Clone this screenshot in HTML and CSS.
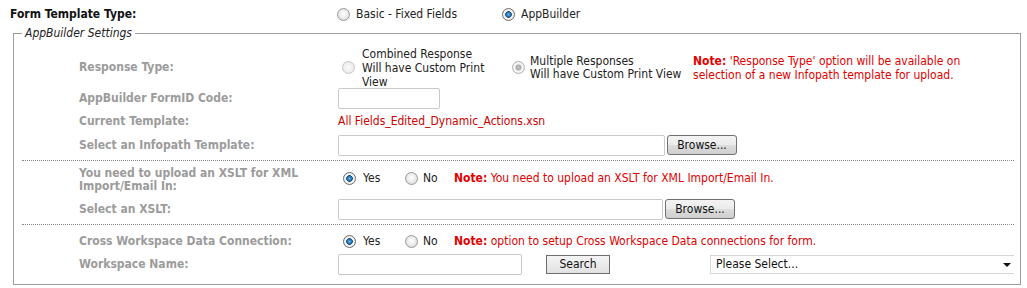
FILE: index.html
```html
<!DOCTYPE html>
<html lang="en">
    <head>
        <meta charset="UTF-8">
        <title> Form Template Settings </title>
        <link rel="stylesheet" href="styles.css">
    </head>

    <body>

        <!-- Type of template -->
        <div class="top">
            <span class="top-label">Form Template Type:</span>
            <label class="opt opt-basic"><input type="radio" name="templateType"> Basic - Fixed Fields</label>
            <label class="opt"><input type="radio" name="templateType" checked> AppBuilder</label>
        </div>

        <fieldset class="settings">
            <legend>AppBuilder Settings</legend>

            <!-- Response type -->
            <div class="row row-response">
                <span class="lbl">Response Type:</span>
                <div class="val">
                    <label class="opt opt-combined"><input type="radio" name="responseType" disabled>
                        <span>Combined Response<br>Will have Custom Print<br>View</span></label>
                    <label class="opt opt-multiple"><input type="radio" name="responseType" checked disabled>
                        <span>Multiple Responses<br>Will have Custom Print View</span></label>
                    <p class="note"><b>Note:</b> 'Response Type' option will be available on<br>selection of a new Infopath template for upload.</p>
                </div>
            </div>

            <div class="row row-formid">
                <span class="lbl">AppBuilder FormID Code:</span>
                <div class="val"><input type="text" class="txt txt-short"></div>
            </div>

            <div class="row row-current">
                <span class="lbl">Current Template:</span>
                <div class="val"><span class="current">All Fields_Edited_Dynamic_Actions.xsn</span></div>
            </div>

            <div class="row row-file">
                <span class="lbl">Select an Infopath Template:</span>
                <div class="val">
                    <input type="text" class="txt txt-file">
                    <button class="btn btn-browse">Browse...</button>
                </div>
            </div>

            <hr class="sep">

            <!-- XSLT -->
            <div class="row row-xslt">
                <span class="lbl">You need to upload an XSLT for XML<br>Import/Email In:</span>
                <div class="val val-yesno">
                    <label class="opt opt-yes"><input type="radio" name="xslt" checked> Yes</label>
                    <label class="opt opt-no"><input type="radio" name="xslt"> No</label>
                    <p class="note"><b>Note:</b> You need to upload an XSLT for XML Import/Email In.</p>
                </div>
            </div>

            <div class="row row-file2">
                <span class="lbl">Select an XSLT:</span>
                <div class="val">
                    <input type="text" class="txt txt-file2">
                    <button class="btn btn-browse">Browse...</button>
                </div>
            </div>

            <hr class="sep">

            <!-- Cross workspace -->
            <div class="row row-cross">
                <span class="lbl">Cross Workspace Data Connection:</span>
                <div class="val">
                    <label class="opt opt-yes"><input type="radio" name="cross" checked> Yes</label>
                    <label class="opt opt-no"><input type="radio" name="cross"> No</label>
                    <p class="note"><b>Note:</b> option to setup Cross Workspace Data connections for form.</p>
                </div>
            </div>

            <div class="row row-workspace">
                <span class="lbl">Workspace Name:</span>
                <div class="val">
                    <input type="text" class="txt txt-workspace">
                    <button class="btn btn-search">Search</button>
                    <div class="select">Please Select...<span class="arrow"></span></div>
                </div>
            </div>
        </fieldset>

    </body>
</html>
```

FILE: styles.css
```css
/* General */
html, body { margin: 0; background: #ffffff; }
body
{
    font-family: "DejaVu Sans Condensed", "DejaVu Sans", sans-serif;
    font-stretch: condensed;
    font-size: 12px;
    color: #222222;
}
p { margin: 0; }

/* Top row */
.top
{
    display: flex;
    align-items: center;
    height: 20px;
    padding-top: 4px;
    padding-left: 10px;
}
.top-label { width: 327px; font-weight: bold; color: #111111; }
.opt-basic { width: 165px; }

/* Radios */
.opt { display: flex; align-items: center; white-space: nowrap; }
.opt input
{
    appearance: none;
    -webkit-appearance: none;
    width: 13px;
    height: 13px;
    margin: 0 6px 0 0;
    border-radius: 50%;
    border: 1px solid #9a9a9a;
    background: radial-gradient(circle at 50% 45%, #ffffff 0, #f0f0f0 40%, #cfcfcf 100%);
    box-sizing: border-box;
    flex: none;
}
.opt input:checked
{
    background: radial-gradient(circle at 50% 50%, #6fb6e8 0, #2a76b3 2px, #174f7d 3px, #e9e9e9 3.6px, #f6f6f6 4.5px, #cccccc 100%);
    border-color: #6c6c6c;
}
.opt input:disabled { border-color: #c6c6c6; background: radial-gradient(circle, #fbfbfb 0, #eeeeee 60%, #e0e0e0 100%); }
.opt input:disabled:checked
{
    background: radial-gradient(circle, #c8c8c8 0, #a9a9a9 2.5px, #eeeeee 3.4px, #f8f8f8 4.5px, #dddddd 100%);
    border-color: #b0b0b0;
}

/* Fieldset */
.settings
{
    box-sizing: border-box;
    width: 1008px;
    margin: 2px 0 0 13px;
    padding: 4px 6px 9px 8px;
    border: 1px solid #9c9c9c;
}
.settings legend
{
    padding: 0 3px;
    font-style: italic;
    line-height: 14px;
    color: #222222;
}

.row
{
    display: grid;
    grid-template-columns: 259px 1fr;
    align-items: center;
    padding-left: 57px;
}
.lbl { font-weight: bold; color: #9b9b9b; line-height: 13px; }
.val { display: flex; align-items: center; }

.note { color: #e00000; line-height: 14px; }
.note b { font-weight: bold; }

/* Row sizes */
.row-response { height: 44px; }
.row-response .lbl { padding-top: 2px; }
.row-response .val { box-sizing: border-box; height: 44px; padding-top: 3px; }
.opt-combined { width: 170px; padding-left: 4px; line-height: 14px; color: #222222; }
.opt-combined input { margin-right: 7px; }
.opt-multiple { width: 181px; line-height: 13px; color: #222222; }
.opt-multiple input { margin-right: 5px; }

.row-formid { height: 20px; }
.row-current { height: 26px; }
.row-file { height: 22px; }
.row-xslt { align-items: start; padding-top: 6px; height: 24px; }
.val-yesno { padding-top: 4px; }
.row-file2 { height: 22px; margin-top: 7px; }
.row-cross { height: 18px; margin-top: 7px; }
.row-workspace { height: 22px; margin-top: 3px; }

.opt-yes { width: 62px; padding-left: 5px; }
.opt-yes input { margin-right: 7px; }
.opt-no { width: 49px; }
.opt-no input { margin-right: 5px; }

.current { color: #cc0000; }

/* Fields */
.txt
{
    box-sizing: border-box;
    height: 21px;
    margin: 0;
    border: 1px solid #c9c9c9;
    border-radius: 2px;
    background: #ffffff;
}
.txt-short { width: 102px; }
.txt-file { width: 327px; }
.txt-file2 { width: 325px; }
.txt-workspace { width: 184px; }

.btn
{
    box-sizing: border-box;
    height: 20px;
    padding: 0;
    border: 1px solid #707070;
    border-radius: 3px;
    background: linear-gradient(#f3f3f3, #ebebeb 50%, #dddddd 51%, #cfcfcf);
    font-family: inherit;
    font-size: 12px;
    color: #111111;
}
.btn-browse { width: 70px; margin-left: 2px; }
.btn-search
{
    width: 64px;
    height: 19px;
    margin-left: 24px;
    border-color: #6e6e6e;
    border-radius: 0;
    background: linear-gradient(#f4f4f4, #e2e2e2);
}

.select
{
    position: relative;
    box-sizing: border-box;
    width: 304px;
    height: 19px;
    margin-left: 100px;
    padding-left: 5px;
    line-height: 17px;
    border: 1px solid #d6d6d6;
    border-right: none;
    color: #111111;
}
.select .arrow
{
    position: absolute;
    right: 3px;
    top: 7px;
    border-left: 4px solid transparent;
    border-right: 4px solid transparent;
    border-top: 4px solid #111111;
}

.sep
{
    margin: 4px 0 0 0;
    height: 0;
    border: none;
    border-top: 1px dotted #8a8a8a;
}
```
